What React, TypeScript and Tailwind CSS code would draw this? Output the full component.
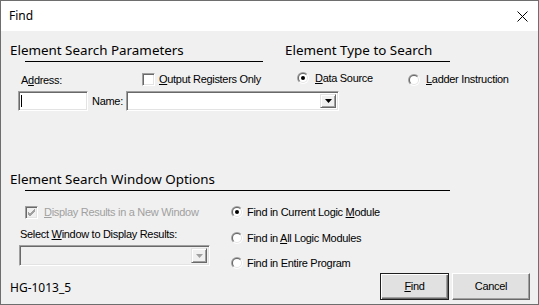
import React from 'react'

const ui = "font-['Liberation_Sans',Arial,sans-serif] text-[11px] tracking-[-0.3px] leading-[13px] text-black"
const seg = "font-['Noto_Sans','Open_Sans',sans-serif]"

function Radio({ checked }: { checked?: boolean }) {
  return (
    <svg width="12" height="12" viewBox="0 0 12 12" className="shrink-0">
      <defs>
        <linearGradient id="rg1" x1="0" y1="0" x2="1" y2="1">
          <stop offset="0.45" stopColor="#a0a0a0" />
          <stop offset="0.55" stopColor="#ffffff" />
        </linearGradient>
        <linearGradient id="rg2" x1="0" y1="0" x2="1" y2="1">
          <stop offset="0.45" stopColor="#696969" />
          <stop offset="0.55" stopColor="#e3e3e3" />
        </linearGradient>
      </defs>
      <circle cx="6" cy="6" r="6" fill="url(#rg1)" />
      <circle cx="6" cy="6" r="5" fill="url(#rg2)" />
      <circle cx="6" cy="6" r="4" fill="#ffffff" />
      {checked && <circle cx="6" cy="6" r="2" fill="#000000" />}
    </svg>
  )
}

function Check({ checked, disabled }: { checked?: boolean; disabled?: boolean }) {
  return (
    <div
      className={`w-[13px] h-[13px] shrink-0 border border-t-[#a0a0a0] border-l-[#a0a0a0] border-r-white border-b-white shadow-[inset_1px_1px_0_#696969,inset_-1px_-1px_0_#e3e3e3] flex items-center justify-center ${disabled ? 'bg-[#f0f0f0]' : 'bg-white'}`}
    >
      {checked && (
        <svg width="9" height="9" viewBox="0 0 9 9">
          <path d="M1 4 L3 6 L8 1 M1 5 L3 7 L8 2 M1 6 L3 8 L8 3" stroke={disabled ? '#a0a0a0' : '#000'} strokeWidth="1" fill="none" />
        </svg>
      )}
    </div>
  )
}

function DropBtn({ disabled }: { disabled?: boolean }) {
  return (
    <div className="w-[16px] h-full bg-[#f0f0f0] border border-t-[#e3e3e3] border-l-[#e3e3e3] border-r-[#696969] border-b-[#696969] shadow-[inset_1px_1px_0_#ffffff,inset_-1px_-1px_0_#a0a0a0] flex items-center justify-center">
      <svg width="7" height="4" viewBox="0 0 7 4">
        <path d="M0 0 H7 L3.5 4 Z" fill={disabled ? '#a0a0a0' : '#000'} />
      </svg>
    </div>
  )
}

function U({ children }: { children: React.ReactNode }) {
  return <span className="underline underline-offset-[1px]">{children}</span>
}

export default function App() {
  return (
    <div className="w-[539px] h-[305px] border border-[#6e6e6e] flex flex-col overflow-hidden">
      {/* title bar */}
      <div className="h-[30px] bg-white flex items-center justify-between pl-[8px] pr-[10px]">
        <span className={`${seg} text-[12px] text-black`}>Find</span>
        <svg width="11" height="11" viewBox="0 0 11 11">
          <path d="M0.5 0.5 L10.5 10.5 M10.5 0.5 L0.5 10.5" stroke="#000" strokeWidth="1" />
        </svg>
      </div>

      <div className="flex-1 bg-[#f0f0f0] flex flex-col">
        {/* headings */}
        <div className={`flex mt-[10px] h-[18px] items-center ${seg} text-[13.4px] text-black`}>
          <div className="w-[284px] pl-[9px]">Element Search Parameters</div>
          <div>Element Type to Search</div>
        </div>
        <div className="flex mt-[2px]">
          <div className="ml-[24px] w-[238px] h-px bg-black" />
          <div className="ml-[37px] w-[150px] h-px bg-black" />
        </div>

        {/* address / checkbox / radios */}
        <div className={`flex mt-[9px] h-[16px] ${ui}`}>
          <div className="w-[141px] pl-[20px] pt-[3px]">A<U>d</U>dress:</div>
          <div className="w-[155px] flex items-center gap-[4px]">
            <Check />
            <span><U>O</U>utput Registers Only</span>
          </div>
          <div className="w-[111px] flex items-center gap-[6px] -mt-[2px]">
            <Radio checked />
            <span><U>D</U>ata Source</span>
          </div>
          <div className="flex items-center gap-[6px] mt-[1px]">
            <Radio />
            <span><U>L</U>adder Instruction</span>
          </div>
        </div>

        {/* address input / name combo */}
        <div className={`flex items-center mt-[4px] h-[20px] ${ui}`}>
          <div className="ml-[17px] w-[70px] h-full bg-white border border-t-[#a0a0a0] border-l-[#a0a0a0] border-r-white border-b-white shadow-[inset_1px_1px_0_#696969,inset_-1px_-1px_0_#e3e3e3] flex items-center pl-[2px]">
            <div className="w-px h-[12px] bg-black" />
          </div>
          <div className="ml-[4px] w-[34px]">Name:</div>
          <div className="w-[213px] h-full bg-white border border-t-[#a0a0a0] border-l-[#a0a0a0] border-r-white border-b-white shadow-[inset_1px_1px_0_#696969,inset_-1px_-1px_0_#e3e3e3] flex justify-end p-[2px]">
            <DropBtn />
          </div>
        </div>

        {/* second section heading */}
        <div className={`mt-[59px] h-[18px] flex items-center pl-[9px] ${seg} text-[13.4px] text-black`}>
          Element Search Window Options
        </div>
        <div className="mt-[2px] ml-[24px] w-[425px] h-px bg-black" />

        <div className={`flex mt-[13px] ${ui}`}>
          <div className="w-[230px] flex flex-col">
            <div className="h-[16px] flex items-center gap-[6px] pl-[24px] text-[#a0a0a0]">
              <Check checked disabled />
              <span><U>D</U>isplay Results in a New Window</span>
            </div>
            <div className="mt-[7px] h-[14px] flex items-center pl-[19px]">
              <span>Select <U>W</U>indow to Display Results:</span>
            </div>
            <div className="mt-[4px] ml-[18px] w-[191px] h-[21px] bg-[#f0f0f0] border border-t-[#a0a0a0] border-l-[#a0a0a0] border-r-white border-b-white shadow-[inset_1px_1px_0_#696969,inset_-1px_-1px_0_#e3e3e3] flex justify-end p-[2px]">
              <DropBtn disabled />
            </div>
          </div>
          <div className="flex flex-col">
            <div className="h-[16px] flex items-center gap-[4px]">
              <Radio checked />
              <span>Find in Current Logic <U>M</U>odule</span>
            </div>
            <div className="mt-[10px] h-[16px] flex items-center gap-[4px]">
              <Radio />
              <span>Find in <U>A</U>ll Logic Modules</span>
            </div>
            <div className="mt-[9px] h-[16px] flex items-center gap-[4px]">
              <Radio />
              <span>Find in Entire Program</span>
            </div>
          </div>
        </div>

        {/* footer */}
        <div className="mt-auto mb-[4px] flex items-end">
          <div className={`pl-[9px] pb-[3px] ${seg} text-[12px] text-black`}>HG-1013_5</div>
          <div className={`ml-auto mr-[8px] flex gap-[3px] ${ui}`}>
            <button className="w-[69px] h-[27px] bg-[#e1e1e1] border border-[#1e1e1e] shadow-[inset_1px_1px_0_#ffffff,inset_-1px_-1px_0_#696969,inset_-2px_-2px_0_#a0a0a0] flex items-center justify-center">
              <span><U>F</U>ind</span>
            </button>
            <button className="w-[78px] h-[27px] bg-[#e1e1e1] border border-t-white border-l-white border-r-[#696969] border-b-[#696969] shadow-[inset_-1px_-1px_0_#a0a0a0] flex items-center justify-center">
              Cancel
            </button>
          </div>
        </div>
      </div>
    </div>
  )
}
